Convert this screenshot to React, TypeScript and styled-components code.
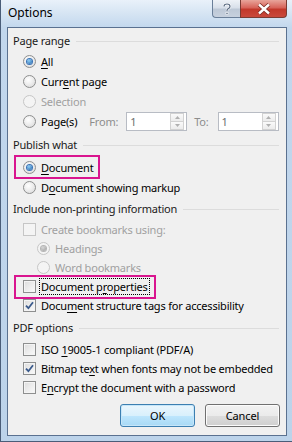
import React from "react";
import styled, { createGlobalStyle, css } from "styled-components";

const Global = createGlobalStyle`
  html, body { margin: 0; padding: 0; background: #bcd3ea; }
  body { font-family: "Noto Sans", "Open Sans", "DejaVu Sans", sans-serif; font-size: 11px; letter-spacing: -0.2px; color: #000; }
  * { box-sizing: border-box; }
`;

const Window = styled.div`
  width: 292px;
  height: 442px;
  background: linear-gradient(180deg, #e9f1fa 0px, #d5e4f3 14px, #c2d7ed 28px, #bcd3ea 100%);
  border: 1px solid #4a5d78;
  border-top: none;
  border-right: none;
  display: flex;
  flex-direction: column;
  position: relative;
`;

const TitleBar = styled.div`
  height: 27px;
  display: flex;
  align-items: flex-start;
  padding-left: 7px;
`;

const Caption = styled.div`
  font-size: 12px;
  letter-spacing: 0;
  line-height: 26px;
  color: #000;
  flex: 1;
`;

const CaptionButtons = styled.div`
  display: flex;
  margin-right: 5px;
`;

const CapBtn = styled.div<{ $close?: boolean }>`
  height: 18px;
  display: flex;
  align-items: center;
  justify-content: center;
  border: 1px solid #6a7f99;
  border-top: none;
  ${(p) =>
    p.$close
      ? css`
          width: 47px;
          border-radius: 0 0 4px 0;
          border-color: #7a3b33;
          background: linear-gradient(180deg, #e8a59b 0%, #d7645a 45%, #c2382b 55%, #c9493c 100%);
        `
      : css`
          width: 28px;
          border-right: none;
          border-radius: 0 0 0 4px;
          background: linear-gradient(180deg, #eef2f7 0%, #d8e0ea 45%, #bdc8d6 55%, #c7d1de 100%);
        `}
`;

const Client = styled.div`
  flex: 1;
  margin: 0 5px 5px 6px;
  background: #f0f0f0;
  border: 1px solid #5a7190;
  padding: 5px 6px 0 5px;
  display: flex;
  flex-direction: column;
`;

const GroupHeader = styled.div<{ $mt?: number }>`
  height: 16px;
  line-height: 16px;
  margin-top: ${(p) => p.$mt ?? 0}px;
  display: flex;
  align-items: center;
  color: #1a1a1a;
  &::after {
    content: "";
    flex: 1;
    height: 1px;
    background: #dcdcdc;
    margin-left: 6px;
    margin-right: 1px;
  }
`;

const Rows = styled.div<{ $mt?: number }>`
  display: flex;
  flex-direction: column;
  margin-top: ${(p) => p.$mt ?? 0}px;
`;

const Row = styled.div<{ $h?: number; $indent?: number; $disabled?: boolean }>`
  height: ${(p) => p.$h ?? 20}px;
  display: flex;
  align-items: center;
  padding-left: ${(p) => p.$indent ?? 10}px;
  color: ${(p) => (p.$disabled ? "#a0a0a0" : "#000")};
  gap: 5px;
`;

const Highlight = styled.div`
  display: flex;
  align-items: center;
  gap: 5px;
  border: 2px solid #d9158f;
  margin-left: -9px;
  padding: 0 5px 0 7px;
  height: 24px;
`;

const Label = styled.span<{ $focus?: boolean }>`
  white-space: nowrap;
  ${(p) =>
    p.$focus &&
    css`
      outline: 1px dotted #000;
      outline-offset: 0px;
      padding: 0 1px;
      margin-left: -1px;
    `}
  u { text-decoration: underline; text-underline-offset: 2px; }
`;

const RadioCircle = styled.span<{ $checked?: boolean; $disabled?: boolean }>`
  width: 13px;
  height: 13px;
  border-radius: 50%;
  flex: none;
  border: 1px solid ${(p) => (p.$disabled ? "#c6c6c6" : "#8e8f8f")};
  background: ${(p) =>
    p.$disabled
      ? "#f4f4f4"
      : "radial-gradient(circle at 40% 35%, #ffffff 0%, #f0f0f0 40%, #d6d6d6 100%)"};
  display: flex;
  align-items: center;
  justify-content: center;
  &::after {
    content: "";
    display: ${(p) => (p.$checked ? "block" : "none")};
    width: 5px;
    height: 5px;
    border-radius: 50%;
    background: ${(p) =>
      p.$disabled
        ? "radial-gradient(circle at 40% 35%, #d8d8d8, #9a9a9a)"
        : "radial-gradient(circle at 40% 35%, #8fd0f6, #1d5fa8)"};
    box-shadow: 0 0 0 1px ${(p) => (p.$disabled ? "#b5b5b5" : "#3b74b8")};
  }
`;

const CheckBoxBox = styled.span<{ $disabled?: boolean }>`
  width: 13px;
  height: 13px;
  flex: none;
  border: 1px solid ${(p) => (p.$disabled ? "#c6c6c6" : "#8e8f8f")};
  background: ${(p) =>
    p.$disabled ? "#f4f4f4" : "linear-gradient(135deg, #dcdcdc 0%, #ececec 50%, #fafafa 100%)"};
  box-shadow: inset 0 0 0 1px #f4f4f4;
  display: flex;
  align-items: center;
  justify-content: center;
`;

const Radio: React.FC<{ checked?: boolean; disabled?: boolean }> = ({ checked, disabled }) => (
  <RadioCircle $checked={checked} $disabled={disabled} />
);

const Check: React.FC<{ checked?: boolean; disabled?: boolean }> = ({ checked, disabled }) => (
  <CheckBoxBox $disabled={disabled}>
    {checked && (
      <svg width="9" height="9" viewBox="0 0 9 9">
        <path d="M1 4.6 L3.4 7.2 L8 1.2" fill="none" stroke="#3a5a8c" strokeWidth="1.8" />
      </svg>
    )}
  </CheckBoxBox>
);

const RangeLabel = styled.span<{ $ml?: number }>`
  color: #8d8d8d;
  margin-left: ${(p) => p.$ml ?? 0}px;
`;

const Spin = styled.div<{ $ml?: number }>`
  width: 61px;
  height: 19px;
  margin-left: ${(p) => p.$ml ?? 0}px;
  border: 1px solid #b8bcc4;
  background: #fff;
  display: flex;
  align-items: center;
  padding: 0 0 0 3px;
  color: #6d6d6d;
`;

const SpinText = styled.span`
  flex: 1;
`;

const SpinButtons = styled.div`
  width: 14px;
  height: 17px;
  display: flex;
  flex-direction: column;
  margin-right: 2px;
`;

const SpinHalf = styled.div`
  flex: 1;
  border: 1px solid #d2d2d2;
  background: linear-gradient(180deg, #fafafa, #ececec);
  display: flex;
  align-items: center;
  justify-content: center;
  & + & { border-top: none; }
`;

const SpinBox: React.FC<{ value: string; ml?: number }> = ({ value, ml }) => (
  <Spin $ml={ml}>
    <SpinText>{value}</SpinText>
    <SpinButtons>
      <SpinHalf>
        <svg width="5" height="3" viewBox="0 0 5 3">
          <path d="M0 3 L2.5 0 L5 3Z" fill="#b0b0b0" />
        </svg>
      </SpinHalf>
      <SpinHalf>
        <svg width="5" height="3" viewBox="0 0 5 3">
          <path d="M0 0 L2.5 3 L5 0Z" fill="#b0b0b0" />
        </svg>
      </SpinHalf>
    </SpinButtons>
  </Spin>
);

const ButtonBar = styled.div`
  display: flex;
  justify-content: flex-end;
  gap: 10px;
  margin-top: 7px;
  padding-right: 0px;
`;

const Button = styled.button<{ $default?: boolean }>`
  width: 75px;
  height: 23px;
  font-family: inherit;
  font-size: 11px;
  letter-spacing: -0.1px;
  color: #000;
  border-radius: 3px;
  border: 1px solid ${(p) => (p.$default ? "#3c7fb1" : "#707070")};
  background: ${(p) =>
    p.$default
      ? "linear-gradient(180deg, #eaf6fd 0%, #d9f0fc 50%, #bee6fd 51%, #a7d9f5 100%)"
      : "linear-gradient(180deg, #f2f2f2 0%, #ebebeb 50%, #dddddd 51%, #cfcfcf 100%)"};
  box-shadow: inset 0 0 0 1px ${(p) => (p.$default ? "#c6e6f9" : "#fcfcfc")};
  padding: 0;
`;

export default function App() {
  return (
    <>
      <Global />
      <Window>
        <TitleBar>
          <Caption>Options</Caption>
          <CaptionButtons>
            <CapBtn>
              <svg width="10" height="12" viewBox="0 0 10 12">
                <path
                  d="M2 3.5 C2 1.5 3.5 1 5 1 C6.8 1 8 2 8 3.5 C8 5 6.5 5.5 5.5 6.3 C5 6.7 5 7.2 5 8"
                  fill="none"
                  stroke="#fff"
                  strokeWidth="2.4"
                />
                <path
                  d="M2 3.5 C2 1.5 3.5 1 5 1 C6.8 1 8 2 8 3.5 C8 5 6.5 5.5 5.5 6.3 C5 6.7 5 7.2 5 8"
                  fill="none"
                  stroke="#5a6b82"
                  strokeWidth="1.2"
                />
                <rect x="4" y="9.3" width="2" height="2" fill="#5a6b82" stroke="#fff" strokeWidth="0.6" />
              </svg>
            </CapBtn>
            <CapBtn $close>
              <svg width="14" height="12" viewBox="0 0 14 12">
                <path d="M2 1.5 L12 10.5 M12 1.5 L2 10.5" stroke="#7a2a22" strokeWidth="4" />
                <path d="M2 1.5 L12 10.5 M12 1.5 L2 10.5" stroke="#fff" strokeWidth="2.4" />
              </svg>
            </CapBtn>
          </CaptionButtons>
        </TitleBar>
        <Client>
          <GroupHeader>Page range</GroupHeader>
          <Rows $mt={2}>
            <Row>
              <Radio checked />
              <Label>
                <u>A</u>ll
              </Label>
            </Row>
            <Row>
              <Radio />
              <Label>
                Curr<u>e</u>nt page
              </Label>
            </Row>
            <Row $disabled>
              <Radio disabled />
              <Label>Selection</Label>
            </Row>
            <Row>
              <Radio />
              <Label>
                Pa<u>g</u>e(s)
              </Label>
              <RangeLabel $ml={7}>From:</RangeLabel>
              <SpinBox value="1" ml={3} />
              <RangeLabel $ml={2}>To:</RangeLabel>
              <SpinBox value="1" ml={4} />
            </Row>
          </Rows>

          <GroupHeader $mt={6}>Publish what</GroupHeader>
          <Rows $mt={4}>
            <Row>
              <Highlight>
                <Radio checked />
                <Label>
                  <u>D</u>ocument
                </Label>
              </Highlight>
            </Row>
            <Row>
              <Radio />
              <Label>
                D<u>o</u>cument showing markup
              </Label>
            </Row>
          </Rows>

          <GroupHeader $mt={4}>Include non-printing information</GroupHeader>
          <Rows $mt={3}>
            <Row $h={19} $disabled>
              <Check disabled />
              <Label>Create bookmarks using:</Label>
            </Row>
            <Row $h={19} $indent={24} $disabled>
              <Radio checked disabled />
              <Label>Headings</Label>
            </Row>
            <Row $h={19} $indent={24} $disabled>
              <Radio disabled />
              <Label>Word bookmarks</Label>
            </Row>
            <Row $h={19}>
              <Highlight>
                <Check />
                <Label $focus>
                  Document p<u>r</u>operties
                </Label>
              </Highlight>
            </Row>
            <Row $h={19}>
              <Check checked />
              <Label>
                Docu<u>m</u>ent structure tags for accessibility
              </Label>
            </Row>
          </Rows>

          <GroupHeader $mt={5}>PDF options</GroupHeader>
          <Rows $mt={4}>
            <Row $h={19}>
              <Check />
              <Label>
                ISO <u>1</u>9005-1 compliant (PDF/A)
              </Label>
            </Row>
            <Row $h={19}>
              <Check checked />
              <Label>
                Bitmap te<u>x</u>t when fonts may not be embedded
              </Label>
            </Row>
            <Row $h={19}>
              <Check />
              <Label>
                E<u>n</u>crypt the document with a password
              </Label>
            </Row>
          </Rows>

          <ButtonBar>
            <Button $default>OK</Button>
            <Button>Cancel</Button>
          </ButtonBar>
        </Client>
      </Window>
    </>
  );
}
